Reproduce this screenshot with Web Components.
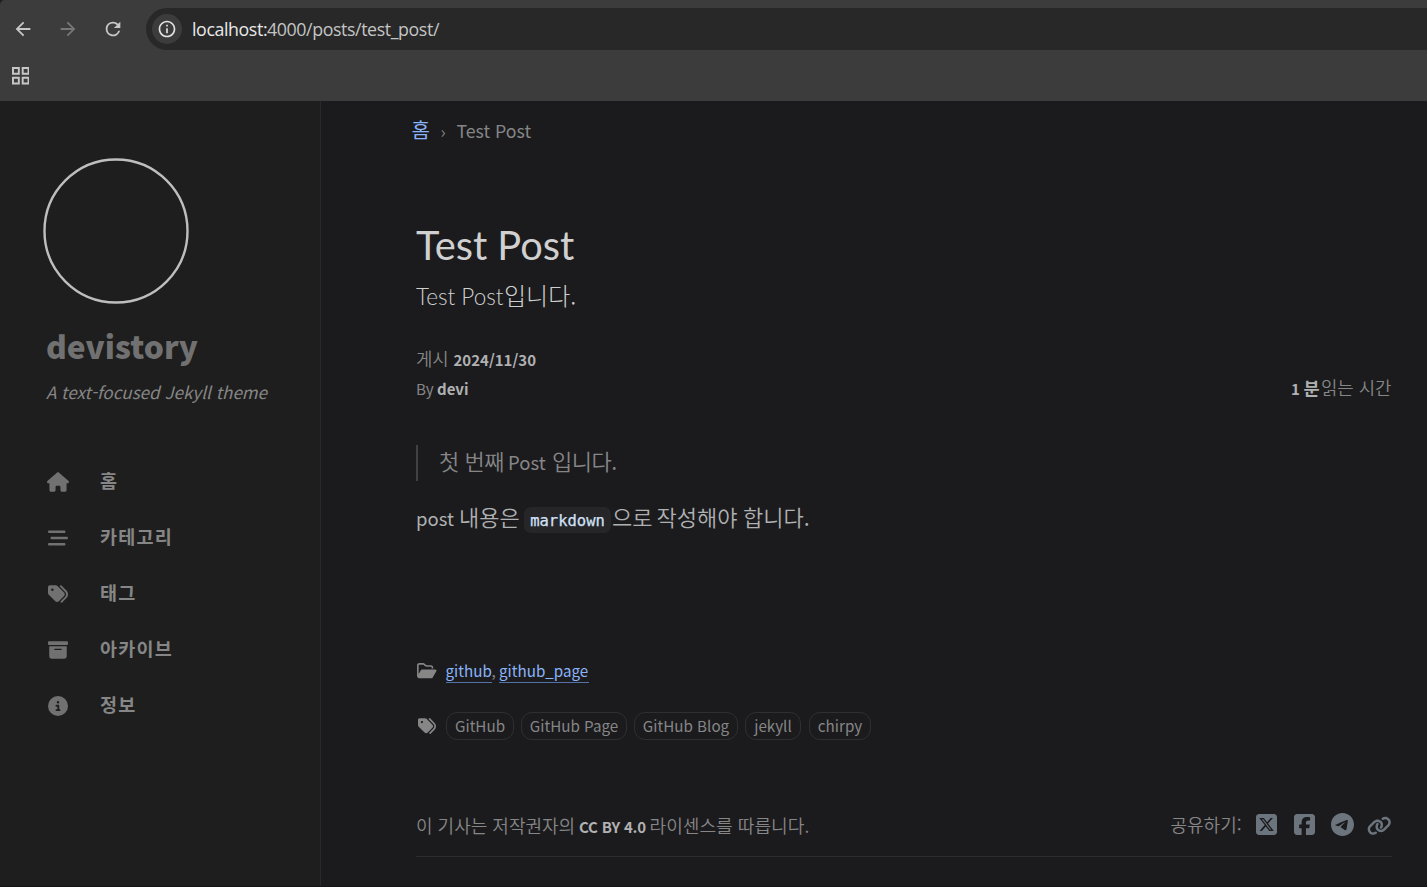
<!DOCTYPE html>
<html lang="ko">
<head>
<meta charset="utf-8">
<title>Test Post | devistory</title>
<style>
html,body{margin:0;height:100%;background:#1b1b1e;overflow:hidden}
body{font-family:"Noto Sans CJK KR",sans-serif;color:#868686}
</style>
</head>
<body>
<blog-window></blog-window>
<script>
const ICONS = {
  back:['0 0 24 24','M20 11H7.83l5.59-5.59L12 4l-8 8 8 8 1.41-1.41L7.83 13H20v-2z'],
  forward:['0 0 24 24','M4 11H16.17l-5.59-5.59L12 4l8 8-8 8-1.41-1.41L16.17 13H4v-2z'],
  reload:['0 0 24 24','M17.65 6.35A7.958 7.958 0 0 0 12 4a8 8 0 1 0 7.73 10h-2.08A6 6 0 1 1 12 6c1.66 0 3.14.69 4.22 1.78L13 11h7V4l-2.35 2.35z'],
  info:['0 0 24 24','M11 17h2v-6h-2v6zm1-15C6.48 2 2 6.48 2 12s4.48 10 10 10 10-4.480 10-10S17.52 2 12 2zm0 18c-4.410 0-8-3.590-8-8s3.590-8 8-8 8 3.590 8 8-3.590 8-8 8zM11 9h2V7h-2v2z'],
  apps:['0 0 18 18','M0 0h8v8H0zM2 2v4h4V2zM10 0h8v8h-8zM12 2v4h4V2zM0 10h8v8H0zM2 12v4h4v-4zM10 10h8v8h-8zM12 12v4h4v-4z'],
  home:['0 0 576 512','M575.8 255.5c0 18-15 32.1-32 32.1h-32l.7 160.2c0 2.7-.2 5.4-.5 8.1V472c0 22.1-17.9 40-40 40H456c-1.1 0-2.2 0-3.3-.1c-1.4 .1-2.8 .1-4.2 .1H416 392c-22.1 0-40-17.9-40-40V448 384c0-17.7-14.3-32-32-32H256c-17.7 0-32 14.3-32 32v64 24c0 22.1-17.9 40-40 40H160 128.1c-1.5 0-3-.1-4.5-.2c-1.2 .1-2.4 .2-3.6 .2H104c-22.1 0-40-17.9-40-40V360c0-.9 0-1.9 .1-2.8V287.6H32c-18 0-32-14-32-32.1c0-9 3-17 10-24L266.4 8c7-7 15-8 22-8s15 2 21 7L564.8 231.5c8 7 12 15 11 24z'],
  stream:['0 0 512 512','M0 96C0 78.3 14.3 64 32 64H416c17.7 0 32 14.3 32 32s-14.3 32-32 32H32C14.3 128 0 113.7 0 96zM64 256c0-17.7 14.3-32 32-32H480c17.7 0 32 14.3 32 32s-14.3 32-32 32H96c-17.7 0-32-14.3-32-32zM448 416c0 17.7-14.3 32-32 32H32c-17.7 0-32-14.3-32-32s14.3-32 32-32H416c17.7 0 32 14.3 32 32z'],
  tags:['0 0 512 512','M345 39.1L472.8 168.4c52.4 53 52.4 138.2 0 191.2L360.8 472.9c-9.3 9.4-24.5 9.5-33.9 .2s-9.5-24.5-.2-33.9L438.6 325.9c33.9-34.3 33.9-89.4 0-123.7L310.9 72.9c-9.3-9.4-9.2-24.6 .2-33.9s24.6-9.2 33.9 .2zM0 229.5V80C0 53.5 21.5 32 48 32H197.5c17 0 33.3 6.7 45.3 18.7l168 168c25 25 25 65.5 0 90.5L277.3 442.7c-25 25-65.5 25-90.5 0l-168-168C6.7 262.7 0 246.5 0 229.5zM144 144a32 32 0 1 0 -64 0 32 32 0 1 0 64 0z'],
  archive:['0 0 512 512','M32 32H480c17.7 0 32 14.3 32 32V96c0 17.7-14.3 32-32 32H32C14.3 128 0 113.7 0 96V64C0 46.3 14.3 32 32 32zm0 128H480V416c0 35.3-28.7 64-64 64H96c-35.3 0-64-28.7-64-64V160zm128 80c0 8.8 7.2 16 16 16H336c8.8 0 16-7.2 16-16s-7.2-16-16-16H176c-8.8 0-16 7.2-16 16z'],
  about:['0 0 512 512','M256 512A256 256 0 1 0 256 0a256 256 0 1 0 0 512zM216 336h24V272H216c-13.3 0-24-10.7-24-24s10.7-24 24-24h48c13.3 0 24 10.7 24 24v88h8c13.3 0 24 10.7 24 24s-10.7 24-24 24H216c-13.3 0-24-10.7-24-24s10.7-24 24-24zm40-208a32 32 0 1 1 0 64 32 32 0 1 1 0-64z'],
  folder:['0 0 576 512','M384 480h48c11.4 0 21.9-6 27.6-15.9l112-192c5.8-9.9 5.8-22.1 .1-32.1S555.5 224 544 224H144c-11.4 0-21.9 6-27.6 15.9L48 357.1V96c0-8.8 7.2-16 16-16H181.5c4.2 0 8.3 1.7 11.3 4.7l26.5 26.5c21 21 49.5 32.8 79.2 32.8H416c8.8 0 16 7.2 16 16v32h48V160c0-35.3-28.7-64-64-64H298.5c-17 0-33.3-6.7-45.3-18.7L226.7 50.7c-12-12-28.3-18.7-45.3-18.7H64C28.7 32 0 60.7 0 96V416c0 35.3 28.7 64 64 64H87.7 384z'],
  x:['0 32 448 448','M64 32C28.7 32 0 60.7 0 96V416c0 35.3 28.7 64 64 64H384c35.3 0 64-28.7 64-64V96c0-35.3-28.7-64-64-64H64zm297.1 84L257.3 234.6 379.4 396H283.8L209 298.1 123.3 396H75.8l111-126.9L69.7 116h98l67.7 89.5L313.6 116h47.5zM323.3 367.6L153.4 142.9H125.1L296.9 367.6h26.3z'],
  facebook:['0 32 448 448','M64 32C28.7 32 0 60.7 0 96V416c0 35.3 28.7 64 64 64h98.2V334.2H109.4V256h52.8V222.3c0-87.1 39.4-127.5 125-127.5c16.2 0 44.2 3.2 55.7 6.4V172c-6-.6-16.5-1-29.6-1c-42 0-58.2 15.9-58.2 57.2V256h83.6l-14.4 78.2H255V480H384c35.3 0 64-28.7 64-64V96c0-35.3-28.7-64-64-64H64z'],
  telegram:['0 8 496 496','M248,8C111.033,8,0,119.033,0,256S111.033,504,248,504,496,392.967,496,256,384.967,8,248,8ZM362.952,176.66c-3.732,39.215-19.881,134.378-28.1,178.3-3.476,18.584-10.322,24.816-16.948,25.425-14.4,1.326-25.338-9.517-39.287-18.661-21.827-14.308-34.158-23.215-55.346-37.177-24.485-16.135-8.612-25,5.342-39.5,3.652-3.793,67.107-61.51,68.335-66.746.153-.655.3-3.1-1.154-4.384s-3.59-.849-5.135-.5q-3.283.746-104.608,69.142-14.845,10.194-26.894,9.934c-8.855-.191-25.888-5.006-38.551-9.123-15.531-5.048-27.875-7.717-26.8-16.291q.84-6.7,18.45-13.7,108.446-47.248,144.628-62.3c68.872-28.647,83.183-33.623,92.511-33.789,2.052-.034,6.639.474,9.61,2.885a10.452,10.452,0,0,1,3.53,6.716A43.765,43.765,0,0,1,362.952,176.66Z'],
  link:['0 0 640 512','M579.8 267.7c56.5-56.5 56.5-148 0-204.5c-50-50-128.8-56.5-186.3-15.4l-1.6 1.1c-14.4 10.3-17.7 30.3-7.4 44.6s30.3 17.7 44.6 7.4l1.6-1.1c32.1-22.9 76-19.3 103.8 8.6c31.5 31.5 31.5 82.5 0 114L422.3 334.8c-31.5 31.5-82.5 31.5-114 0c-27.9-27.9-31.5-71.8-8.6-103.8l1.1-1.6c10.3-14.4 6.9-34.4-7.4-44.6s-34.4-6.9-44.6 7.4l-1.1 1.6C206.5 251.2 213 330 263 380c56.5 56.5 148 56.5 204.5 0L579.8 267.7zM60.2 244.3c-56.5 56.5-56.5 148 0 204.5c50 50 128.8 56.5 186.3 15.4l1.6-1.1c14.4-10.3 17.7-30.3 7.4-44.6s-30.3-17.7-44.6-7.4l-1.6 1.1c-32.1 22.9-76 19.3-103.8-8.6C74 372 74 321 105.5 289.5L217.7 177.2c31.5-31.5 82.5-31.5 114 0c27.9 27.9 31.5 71.8 8.6 103.9l-1.1 1.6c-10.3 14.4-6.9 34.4 7.4 44.6s34.4 6.9 44.6-7.4l1.1-1.6C433.5 260.8 427 182 377 132c-56.5-56.5-148-56.5-204.5 0L60.2 244.3z']
};

function define(name, html) {
  const tpl = document.createElement('template');
  tpl.innerHTML = html;
  customElements.define(name, class extends HTMLElement {
    constructor() { super(); this.attachShadow({mode:'open'}).append(tpl.content.cloneNode(true)); }
  });
}

/* <ui-icon name w h> */
customElements.define('ui-icon', class extends HTMLElement {
  connectedCallback() {
    if (this.shadowRoot) return;
    const [box, d] = ICONS[this.getAttribute('name')];
    const w = this.getAttribute('w'), h = this.getAttribute('h') || w;
    this.attachShadow({mode:'open'}).innerHTML =
      `<style>:host{display:block;flex:none;width:${w}px;height:${h}px}svg{display:block}</style>
       <svg width="${w}" height="${h}" viewBox="${box}" fill="currentColor" fill-rule="evenodd"><path d="${d}"/></svg>`;
  }
});

/* <text-run s w ls>: one run of text with its size, advance width and tracking */
customElements.define('text-run', class extends HTMLElement {
  connectedCallback() {
    if (this.shadowRoot) return;
    const a = n => this.getAttribute(n);
    this.attachShadow({mode:'open'}).innerHTML =
      `<style>:host{display:block;flex:none;white-space:pre;font-size:${a('s')}px;${a('w') ? `width:${a('w')}px;` : ''}letter-spacing:${a('ls') || 0}px}</style><slot></slot>`;
  }
});

/* a row of runs that share a baseline */
define('text-line', `<style>:host{display:flex;align-items:baseline;height:30px;line-height:30px}</style><slot></slot>`);

define('browser-bar', `<style>
:host{display:flex;flex-direction:column;height:101px;background:#3c3c3c;color:#c7c7c7;border-top-left-radius:5px}
.nav{display:flex;align-items:center;height:42px;margin-top:8px;padding-left:12.500px}
.off{color:#777}
.url{flex:1;display:flex;align-items:center;height:42px;margin-left:21.500px;padding-left:6px;border-radius:21px 0 0 21px;background:#282828;box-sizing:border-box}
.site{display:grid;place-items:center;width:30px;height:30px;border-radius:50%;background:#3c3c3c;margin-right:10px;color:#e3e3e3}
text-line{font-family:"Open Sans",sans-serif;color:#c4c4c4}
.host{color:#e8e8e8}
.marks{padding:17px 0 0 11.500px}
</style>
<div class="nav"><ui-icon name="back" w="22" style="margin-left:-.500px"></ui-icon><ui-icon class="off" name="forward" w="22" style="margin-left:23px"></ui-icon><ui-icon name="reload" w="22" style="margin-left:23px;margin-right:.500px"></ui-icon>
<div class="url"><div class="site"><ui-icon name="info" w="20"></ui-icon></div>
<text-line><text-run class="host" s="17.800" w="75" ls="-.400">localhost:</text-run><text-run s="17.800" w="180" ls="-.400">4000/posts/test_post/</text-run></text-line></div></div>
<div class="marks"><ui-icon name="apps" w="17.500"></ui-icon></div>`);

define('nav-item', `<style>:host{display:flex;align-items:center;height:56px;font-weight:700}.i{width:24px;display:grid;place-items:center;color:#717171;margin-right:30px}.t{margin-top:-4px}</style>
<div class="i"><slot name="icon"></slot></div><div class="t"><slot></slot></div>`);

define('side-bar', `<style>
:host{display:block;width:320px;flex:none;background:#1e1e1e;border-right:1px solid #292929;box-sizing:content-box}
.avatar{display:block;margin:57px 0 0 43px}
.name{margin:26px 0 0 46px;font-weight:900;color:#717171}
.tag{margin:17px 0 0 46px;font-style:italic;color:#868686}
nav{margin:47px 0 0 46px;color:#868686}
</style>
<svg class="avatar" width="146" height="146"><circle cx="73" cy="73" r="71.500" fill="none" stroke="#bebebe" stroke-width="2.400"/></svg>
<text-line class="name"><text-run s="31.700">devistory</text-run></text-line>
<text-line class="tag"><text-run s="17.050">A text-focused Jekyll theme</text-run></text-line>
<nav>
<nav-item><ui-icon slot="icon" name="home" w="22" h="20"></ui-icon><text-run s="18.500">홈</text-run></nav-item>
<nav-item><ui-icon slot="icon" name="stream" w="20"></ui-icon><text-run s="18.500" ls="1.200">카테고리</text-run></nav-item>
<nav-item><ui-icon slot="icon" name="tags" w="20"></ui-icon><text-run s="18.500" ls="1.200">태그</text-run></nav-item>
<nav-item><ui-icon slot="icon" name="archive" w="20"></ui-icon><text-run s="18.500" ls="1.200">아카이브</text-run></nav-item>
<nav-item><ui-icon slot="icon" name="about" w="20"></ui-icon><text-run s="18.500" ls="1.200">정보</text-run></nav-item>
</nav>`);

define('tag-pill', `<style>:host{display:flex;flex:none;height:26px;line-height:25px;border:1px solid #2f2f32;border-radius:11px;justify-content:center;box-sizing:content-box}</style><slot></slot>`);

define('post-page', `<style>
:host{display:flex;flex-direction:column;flex:1;min-width:0;padding:0 35px 0 95px;background:#1b1b1e}
.b{font-weight:700;color:#b0b1b2}
.crumb{margin:14px 0 0 -4.500px}
.link{color:#8ab4f8}
.title{margin-top:76px;height:48px;line-height:48px;font-family:Lato,sans-serif;color:#d0d0d0}
.sub{margin-top:11px;color:#cfcfcf;font-weight:300}
.lato{font-family:Lato,sans-serif}
.meta{margin-top:33px}
.by{margin-top:-1px}
.fill{flex:1}
.quote{display:flex;align-items:flex-start;margin-top:43px;height:36px;border-left:2px solid #414141;padding-left:21px;font-weight:350}
.para{margin-top:20px;color:#afb0b1;font-weight:350}
.n{font-weight:400}
code{font-family:"DejaVu Sans Mono",monospace;color:#d3e1f7;background:#262629;border-radius:7px;height:26px;line-height:28px;width:87px;display:flex;justify-content:center;margin-right:1px;-webkit-text-stroke:.25px}
.cats{display:flex;align-items:center;height:30px;margin-top:125px}
.cats .link{border-bottom:1px solid #5373a8;height:25px;line-height:26px}
.cats text-line{margin:2px 0 0 9px;line-height:26px}
.cats ui-icon{margin-left:1px}
.tags{display:flex;align-items:center;margin-top:26px;height:28px}
.tags tag-pill{margin-right:7px}
.foot{display:flex;align-items:center;margin-top:70px;height:30px}
.share{display:flex;align-items:center;margin-top:-3px}
.share ui-icon{color:#6c757d;margin-top:2px}
hr{margin:16px 0 0;border:0;height:1px;background:#2d2d30}
.l{font-weight:350}
.foot .b{line-height:28px}
</style>
<text-line class="crumb"><text-run class="link" s="20" w="29">홈</text-run><text-run s="17" w="16">›</text-run><text-run s="17.700">Test Post</text-run></text-line>
<text-line class="title"><text-run s="39.800">Test Post</text-run></text-line>
<text-line class="sub"><text-run class="lato" s="22.500" w="88">Test Post</text-run><text-run s="24">입니다.</text-run></text-line>
<text-line class="meta l"><text-run s="17.800" w="37.500">게시</text-run><text-run class="b" s="15">2024/11/30</text-run></text-line>
<text-line class="by l"><text-run class="n" s="15.200" w="21">By</text-run><text-run class="b" s="15">devi</text-run><div class="fill"></div><text-run class="b" s="15" w="12.500">1</text-run><text-run class="b" s="17.500" w="17.500">분</text-run><text-run s="17.800" w="71">읽는 시간</text-run></text-line>
<div class="quote"><text-line><text-run s="22" w="69" ls="-.5">첫 번째</text-run><text-run class="n" s="18.500" w="44">Post</text-run><text-run s="22" ls="-.5">입니다.</text-run></text-line></div>
<text-line class="para"><text-run class="n" s="18.500" w="43">post</text-run><text-run s="22" w="65">내용은</text-run><code><text-run s="15.500">markdown</text-run></code><text-run s="22" w="44.500">으로</text-run><text-run s="22" w="86.500">작성해야</text-run><text-run s="22">합니다.</text-run></text-line>
<div class="cats"><ui-icon name="folder" w="19.500" h="17.300"></ui-icon><text-line><text-run class="link" s="15.200" w="46">github</text-run><text-run s="15.200" w="7.500">,</text-run><text-run class="link" s="15.200" w="90">github_page</text-run></text-line></div>
<div class="tags"><ui-icon name="tags" w="18" style="margin:-1px 10px 0 2px"></ui-icon>
<tag-pill style="width:66px"><text-run s="15.200">GitHub</text-run></tag-pill><tag-pill style="width:104px"><text-run s="15.200">GitHub Page</text-run></tag-pill><tag-pill style="width:102px"><text-run s="15.200">GitHub Blog</text-run></tag-pill><tag-pill style="width:54px;margin-right:8px"><text-run s="15.200">jekyll</text-run></tag-pill><tag-pill style="width:60px"><text-run s="15.200">chirpy</text-run></tag-pill></div>
<div class="foot"><text-line class="l"><text-run s="18" w="163">이 기사는 저작권자의</text-run><text-run class="b" s="15" w="70.500" ls="-.2" style="margin-bottom:0">CC BY 4.0</text-run><text-run s="18.100">라이센스를 따릅니다.</text-run></text-line><div class="fill"></div>
<div class="share"><text-run class="l" s="18" w="85.500">공유하기:</text-run><ui-icon name="x" w="21"></ui-icon><ui-icon name="facebook" w="21" style="margin-left:17px"></ui-icon><ui-icon name="telegram" w="23" style="margin-left:16px"></ui-icon><ui-icon name="link" w="24.500" h="19.600" style="margin:4px .500px 0 13px"></ui-icon></div></div>
<hr>`);

define('blog-window', `<style>:host{display:flex;flex-direction:column;height:886px;border-bottom:1px solid #141416;overflow:hidden;background:#202020}.page{display:flex;flex:1;min-height:0}</style>
<browser-bar></browser-bar><div class="page"><side-bar></side-bar><post-page></post-page></div>`);
</script>
</body>
</html>
